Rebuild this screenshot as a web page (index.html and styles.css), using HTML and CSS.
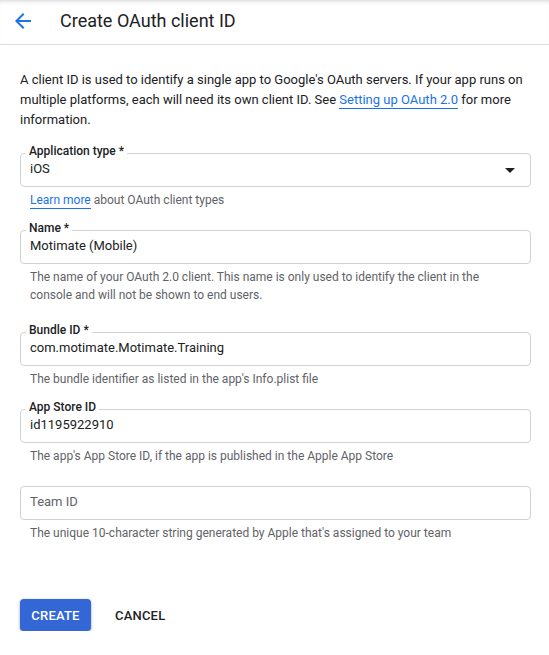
FILE: index.html
```html
<!DOCTYPE html>
<html lang="en">
<head>
<meta charset="utf-8">
<title>Create OAuth client ID</title>
<link rel="stylesheet" href="styles.css">
</head>
<body>
<header class="topbar">
  <button class="back" aria-label="Back">
    <svg viewBox="0 0 24 24" width="24" height="24"><path d="M20 11H7.83l5.59-5.59L12 4l-8 8 8 8 1.41-1.41L7.83 13H20v-2z" fill="#1a73e8"/></svg>
  </button>
  <h1 class="title">Create OAuth client ID</h1>
</header>
<main class="content">
  <p class="intro">A client ID is used to identify a single app to Google's OAuth servers. If your app runs on multiple platforms, each will need its own client ID. See <a class="link" href="#">Setting up OAuth 2.0</a> for more information.</p>

  <div class="field field-first">
    <div class="outline">
      <span class="flabel">Application type *</span>
      <span class="value">iOS</span>
      <span class="caret"></span>
    </div>
    <div class="hint"><a class="link" href="#">Learn more</a> about OAuth client types</div>
  </div>

  <div class="field field-tall">
    <div class="outline">
      <span class="flabel">Name *</span>
      <span class="value">Motimate (Mobile)</span>
    </div>
    <div class="hint">The name of your OAuth 2.0 client. This name is only used to identify the client in the console and will not be shown to end users.</div>
  </div>

  <div class="field">
    <div class="outline">
      <span class="flabel">Bundle ID *</span>
      <span class="value">com.motimate.Motimate.Training</span>
    </div>
    <div class="hint">The bundle identifier as listed in the app's Info.plist file</div>
  </div>

  <div class="field">
    <div class="outline">
      <span class="flabel">App Store ID</span>
      <span class="value">id1195922910</span>
    </div>
    <div class="hint">The app's App Store ID, if the app is published in the Apple App Store</div>
  </div>

  <div class="field">
    <div class="outline">
      <span class="value placeholder">Team ID</span>
    </div>
    <div class="hint">The unique 10-character string generated by Apple that's assigned to your team</div>
  </div>

  <div class="actions">
    <button class="btn btn-primary">Create</button>
    <button class="btn btn-text">Cancel</button>
  </div>
</main>
</body>
</html>
```
FILE: styles.css
```css
* { box-sizing: border-box; }
html, body { margin: 0; padding: 0; background: #fff; }
body {
  font-family: Roboto, "Liberation Sans", Arial, sans-serif;
  color: #202124;
  font-size: 13px;
}
.topbar {
  height: 45px;
  border-bottom: 1px solid #dadce0;
  display: flex;
  align-items: center;
  padding: 0 0 2px 11px;
  box-shadow: inset 0 4px 4px -3px rgba(0,0,0,0.18);
}
.back {
  width: 24px;
  height: 24px;
  padding: 0;
  border: 0;
  background: none;
  display: flex;
}
.title {
  margin: 0 0 0 25px;
  font-size: 18px;
  font-weight: 400;
  line-height: 24px;
  color: #202124;
}
.content {
  padding: 0 18px 0 20px;
}
.intro {
  margin: 25px 0 0;
  line-height: 20px;
  font-size: 13px;
}
.link {
  color: #1a73e8;
  text-decoration: none;
  border-bottom: 1px solid #1a73e8;
  padding-bottom: 1px;
}
.field { margin-top: 21px; }
.field-first { margin-top: 23px; }
.field-tall .hint { padding-bottom: 7px; }
.outline {
  position: relative;
  height: 34px;
  border: 1px solid #d2d2d2;
  border-radius: 4px;
  display: flex;
  align-items: center;
  padding: 0 15px 2px 9px;
}
.flabel {
  position: absolute;
  top: -11px;
  left: 5px;
  padding: 0 3px;
  background: #fff;
  font-size: 12px;
  font-weight: 500;
  line-height: 16px;
  color: #202124;
}
.value {
  flex: 1;
  font-size: 13px;
  line-height: 20px;
}
.placeholder { color: #5f6368; }
.caret {
  width: 0;
  height: 0;
  border-left: 5px solid transparent;
  border-right: 5px solid transparent;
  border-top: 5px solid #202124;
  margin-top: 2px;
}
.hint {
  margin-top: 4px;
  padding: 0 24px 0 10px;
  font-size: 12px;
  line-height: 18px;
  color: #5f6368;
}
.actions {
  margin-top: 57px;
  display: flex;
  align-items: center;
  gap: 24px;
}
.btn {
  font-family: inherit;
  font-size: 13px;
  font-weight: 500;
  text-transform: uppercase;
  letter-spacing: 0.2px;
  border: 0;
  border-radius: 4px;
  height: 32px;
  cursor: pointer;
}
.btn-primary {
  background: #3367d6;
  color: #fff;
  width: 71px;
  padding: 0;
  box-shadow: 0 1px 2px rgba(60,64,67,0.3), 0 1px 3px 1px rgba(60,64,67,0.15);
}
.btn-text {
  background: none;
  color: #202124;
  padding: 0;
}
```
